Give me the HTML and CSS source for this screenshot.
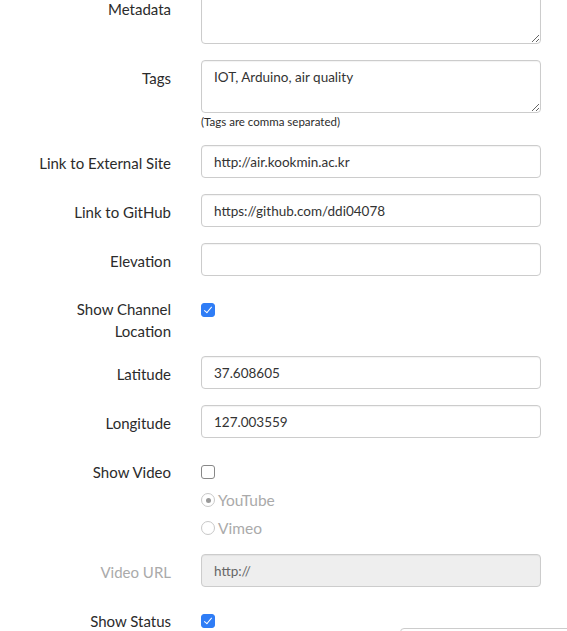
FILE: index.html
```html
<!DOCTYPE html>
<html>
<head>
<meta charset="utf-8">
<link rel="stylesheet" href="styles.css">
</head>
<body>
<form class="form">
  <div class="group">
    <label class="lbl">Metadata</label>
    <div class="ctl"><textarea class="field ta"></textarea></div>
  </div>
  <div class="group tags">
    <label class="lbl">Tags</label>
    <div class="ctl">
      <textarea class="field ta">IOT, Arduino, air quality</textarea>
      <div class="help">(Tags are comma separated)</div>
    </div>
  </div>
  <div class="group">
    <label class="lbl">Link to External Site</label>
    <div class="ctl"><input class="field" type="text" value="http://air.kookmin.ac.kr"></div>
  </div>
  <div class="group">
    <label class="lbl">Link to GitHub</label>
    <div class="ctl"><input class="field" type="text" value="https://github.com/ddi04078"></div>
  </div>
  <div class="group">
    <label class="lbl">Elevation</label>
    <div class="ctl"><input class="field" type="text" value=""></div>
  </div>
  <div class="group two-line">
    <label class="lbl">Show Channel<br>Location</label>
    <div class="ctl checks"><span class="opt"><span class="cb on"></span></span></div>
  </div>
  <div class="group">
    <label class="lbl">Latitude</label>
    <div class="ctl"><input class="field" type="text" value="37.608605"></div>
  </div>
  <div class="group">
    <label class="lbl">Longitude</label>
    <div class="ctl"><input class="field" type="text" value="127.003559"></div>
  </div>
  <div class="group video">
    <label class="lbl">Show Video</label>
    <div class="ctl checks">
      <span class="opt"><span class="cb"></span></span>
      <span class="opt muted"><span class="rd sel"></span>YouTube</span>
      <span class="opt muted"><span class="rd"></span>Vimeo</span>
    </div>
  </div>
  <div class="group">
    <label class="lbl muted">Video URL</label>
    <div class="ctl"><input class="field" type="text" value="http://" disabled></div>
  </div>
  <div class="group">
    <label class="lbl">Show Status</label>
    <div class="ctl checks"><span class="opt"><span class="cb on"></span></span></div>
  </div>
</form>
<div class="popup"></div>
</body>
</html>
```

FILE: styles.css
```css
html, body {
  margin: 0;
  padding: 0;
  background: #fff;
  overflow: hidden;
}
body {
  font-family: "Lato", "Open Sans", sans-serif;
  color: #2b2b2b;
  font-size: 15px;
  line-height: 22px;
}
.form {
  margin-top: -9px;
}
.group {
  display: grid;
  grid-template-columns: 171px 340px;
  column-gap: 30px;
  margin-bottom: 16px;
}
.lbl {
  text-align: right;
  padding-top: 7px;
  font-size: 15px;
  line-height: 22px;
  color: #2b2b2b;
}
.two-line {
  margin-bottom: 14px;
}
.two-line .lbl {
  padding-top: 6px;
}
.video {
  margin-bottom: 15px;
}
.lbl.muted {
  color: #aaa;
}
.field {
  display: block;
  box-sizing: border-box;
  width: 340px;
  height: 33px;
  margin: 0;
  padding: 6px 12px;
  border: 1px solid #ccc;
  border-radius: 4px;
  font-family: "Lato", "Open Sans", sans-serif;
  font-size: 13.5px;
  line-height: 20px;
  color: #333;
  background: #fff;
  box-shadow: inset 0 1px 1px rgba(0,0,0,0.05);
}
.field:disabled {
  background: #eee;
  color: #666;
}
.ta {
  height: 53px;
  resize: vertical;
}
.tags {
  margin-bottom: 15px;
}
.help {
  font-size: 11.5px;
  line-height: 17px;
  color: #2b2b2b;
}
.checks {
  display: flex;
  flex-direction: column;
  gap: 6px;
  padding-top: 7px;
}
.opt {
  display: flex;
  align-items: center;
  height: 22px;
  font-size: 15.5px;
}
.opt.muted {
  color: #aaa;
}
.cb {
  box-sizing: border-box;
  width: 14px;
  height: 14px;
  border: 1px solid #888;
  border-radius: 3px;
  background: #fff;
  position: relative;
}
.cb.on {
  background: #2f7df6;
  border-color: #2f7df6;
}
.cb.on::after {
  content: "";
  position: absolute;
  left: 4px;
  top: 1px;
  width: 3px;
  height: 7px;
  border: solid #fff;
  border-width: 0 1.5px 1.5px 0;
  transform: rotate(40deg);
}
.rd {
  box-sizing: border-box;
  width: 14px;
  height: 14px;
  border: 1px solid #c8c8c8;
  border-radius: 50%;
  background: #fff;
  margin-right: 3px;
  position: relative;
}
.rd.sel::after {
  content: "";
  position: absolute;
  left: 3.5px;
  top: 3.5px;
  width: 5px;
  height: 5px;
  border-radius: 50%;
  background: #999;
}
.popup {
  position: absolute;
  left: 400px;
  top: 628px;
  width: 180px;
  height: 40px;
  border: 1px solid #ccc;
  border-radius: 4px;
  background: #fff;
}
```
